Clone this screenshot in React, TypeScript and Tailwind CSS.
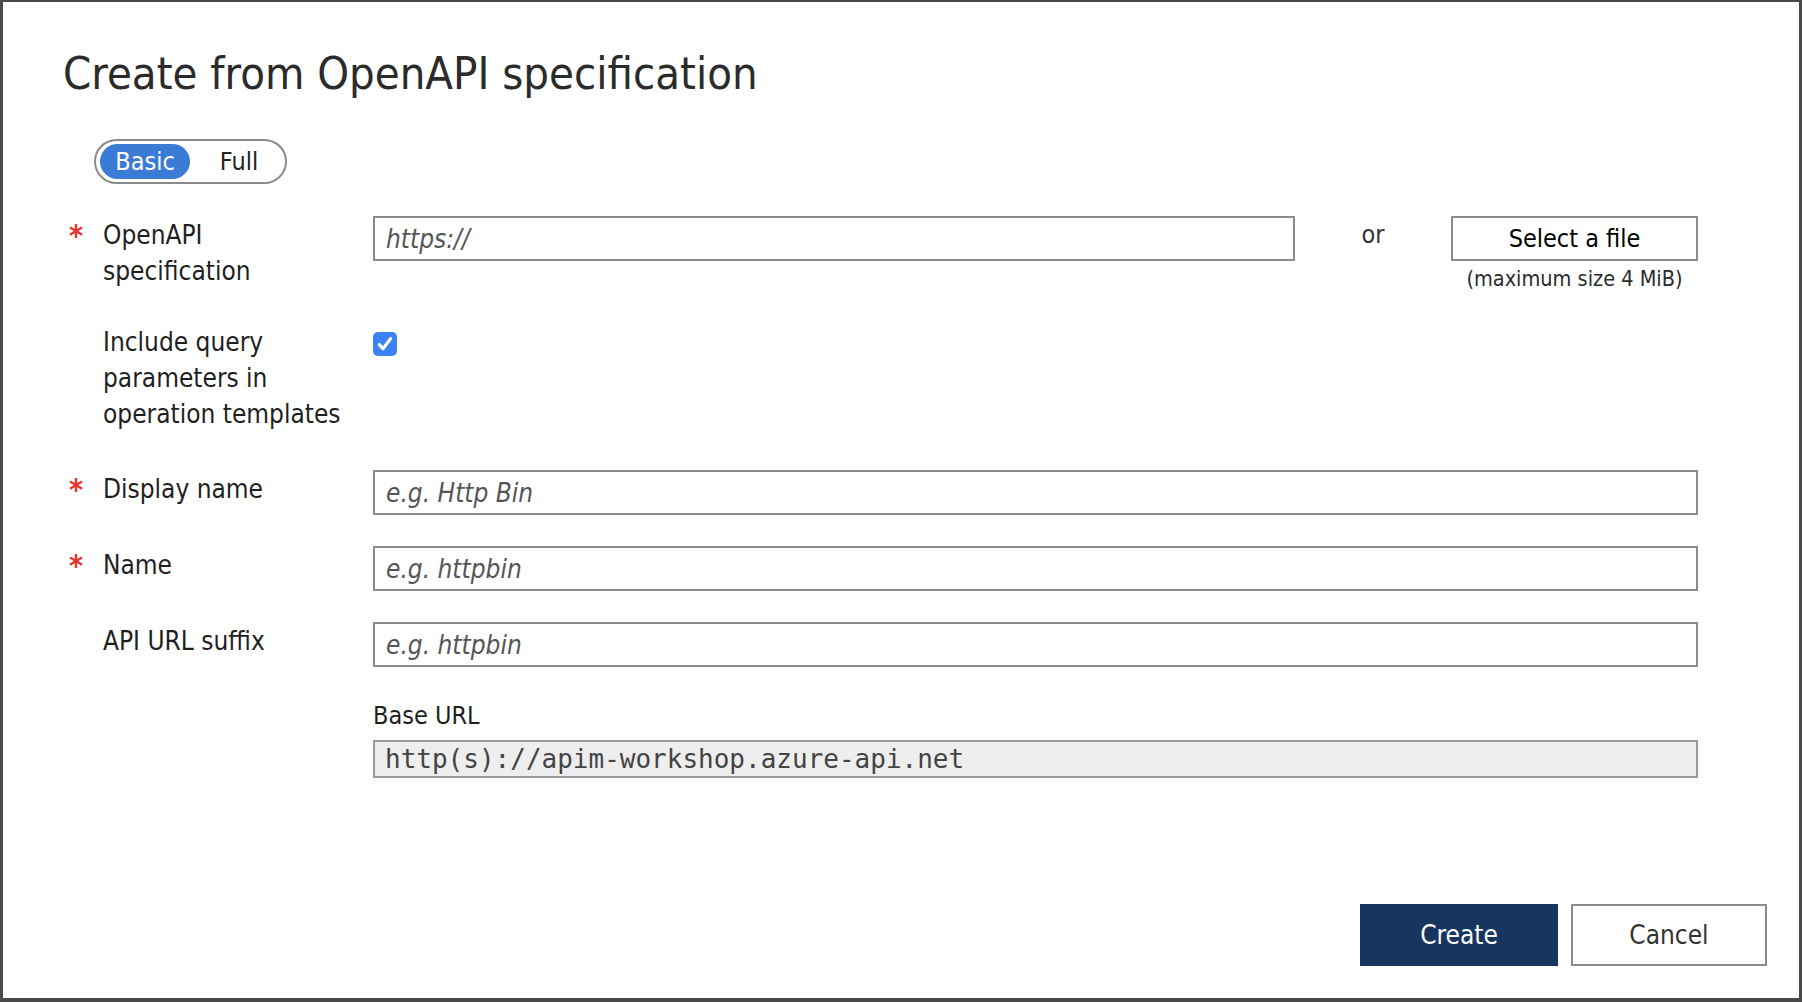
import { useState } from 'react';

const SANS = { fontFamily: '"DejaVu Sans Condensed", "DejaVu Sans", Verdana, sans-serif' };
const MONO = { fontFamily: '"DejaVu Sans Mono", "Liberation Mono", monospace' };

function Req({ on }: { on?: boolean }) {
  return (
    <div className="w-[34px] shrink-0 pt-[2px] text-[30px] font-bold leading-[36px] text-[#e5352b]">
      {on ? '*' : ''}
    </div>
  );
}

function TextField({ placeholder }: { placeholder: string }) {
  return (
    <input
      type="text"
      placeholder={placeholder}
      className="h-[45px] w-full border-2 border-[#8c8c8c] bg-white px-[11px] text-[26px] italic text-[#222] outline-none placeholder:text-[#555]"
      style={SANS}
    />
  );
}

function Row({ required, label, children }: { required?: boolean; label: React.ReactNode; children: React.ReactNode }) {
  return (
    <div className="flex items-start">
      <Req on={required} />
      <div className="w-[270px] shrink-0 pt-[1px] text-[26px] leading-[36px] text-[#1f1f1f]">{label}</div>
      <div className="flex-1">{children}</div>
    </div>
  );
}

export default function App() {
  const [mode, setMode] = useState<'basic' | 'full'>('basic');
  const [queryParams, setQueryParams] = useState(true);

  return (
    <div className="flex h-[1002px] w-full flex-col bg-[#4a4a4a] px-[3px] pt-[2px] font-stretch-condensed" style={SANS}>
      <div className="flex flex-1 flex-col bg-white pb-[32px] pl-[66px] pr-[101px]">
        <h1 className="-ml-[6px] mt-[42px] text-[45px] leading-[60px] text-[#2b2b2b]" style={SANS}>
          Create from OpenAPI specification
        </h1>

        <div className="ml-[25px] mt-[35px] flex h-[45px] w-[193px] items-center rounded-full border-2 border-[#8a8a8a] pl-[4px]">
          <button
            type="button"
            onClick={() => setMode('basic')}
            className={
              mode === 'basic'
                ? 'h-[35px] w-[90px] rounded-full bg-[#3a7bd5] text-[25px] leading-[35px] text-white'
                : 'h-[35px] w-[90px] rounded-full text-[25px] leading-[35px] text-[#222]'
            }
          >
            Basic
          </button>
          <button
            type="button"
            onClick={() => setMode('full')}
            className={
              mode === 'full'
                ? 'ml-[4px] h-[35px] w-[90px] rounded-full bg-[#3a7bd5] text-[25px] leading-[35px] text-white'
                : 'ml-[4px] h-[35px] w-[90px] rounded-full text-[25px] leading-[35px] text-[#222]'
            }
          >
            Full
          </button>
        </div>

        <div className="mt-[32px] flex flex-col">
          <Row required label={<>OpenAPI<br />specification</>}>
            <div className="flex items-start">
              <div className="flex-1">
                <TextField placeholder="https://" />
              </div>
              <div className="w-[156px] shrink-0 pt-[1px] text-center text-[25px] leading-[36px] text-[#333]">or</div>
              <div className="flex w-[247px] shrink-0 flex-col items-center">
                <button
                  type="button"
                  className="h-[45px] w-full border-2 border-[#8c8c8c] bg-white text-[25px] text-black"
                >
                  Select a file
                </button>
                <span className="mt-[4px] text-[21.5px] leading-[28px] text-[#2b2b2b]">(maximum size 4 MiB)</span>
              </div>
            </div>
          </Row>

          <div className="mt-[30px]">
            <Row label={<>Include query<br />parameters in<br />operation templates</>}>
              <label className="mt-[9px] flex h-[24px] w-[24px] cursor-pointer items-center justify-center rounded-[5px] bg-[#3b82f6]">
                <input
                  type="checkbox"
                  className="sr-only"
                  checked={queryParams}
                  onChange={(e) => setQueryParams(e.target.checked)}
                />
                {queryParams && (
                  <svg viewBox="0 0 16 16" className="h-[20px] w-[20px]" fill="none" stroke="white" strokeWidth="2.6" strokeLinecap="round" strokeLinejoin="round">
                    <path d="M3.5 8.5l3 3.2 6-8" />
                  </svg>
                )}
              </label>
            </Row>
          </div>

          <div className="mt-[38px]">
            <Row required label="Display name">
              <TextField placeholder="e.g. Http Bin" />
            </Row>
          </div>

          <div className="mt-[31px]">
            <Row required label="Name">
              <TextField placeholder="e.g. httpbin" />
            </Row>
          </div>

          <div className="mt-[31px]">
            <Row label="API URL suffix">
              <TextField placeholder="e.g. httpbin" />
            </Row>
          </div>

          <div className="mt-[33px] flex">
            <div className="w-[304px] shrink-0" />
            <div className="flex-1">
              <div className="text-[25px] leading-[32px] text-[#1f1f1f]">Base URL</div>
              <div
                className="mt-[8px] flex h-[38px] items-center border-2 border-[#9a9a9a] bg-[#eeeeee] px-[10px] text-[26px] text-[#444]"
                style={MONO}
              >
                http(s)://apim-workshop.azure-api.net
              </div>
            </div>
          </div>
        </div>

        <div className="mt-auto -mr-[69px] flex justify-end gap-[13px]">
          <button type="button" className="h-[62px] w-[198px] bg-[#17365f] text-[26px] text-white">
            Create
          </button>
          <button type="button" className="h-[62px] w-[196px] border-2 border-[#8c8c8c] bg-white text-[26px] text-[#333]">
            Cancel
          </button>
        </div>
      </div>
      <div className="h-[4px] shrink-0" />
    </div>
  );
}
